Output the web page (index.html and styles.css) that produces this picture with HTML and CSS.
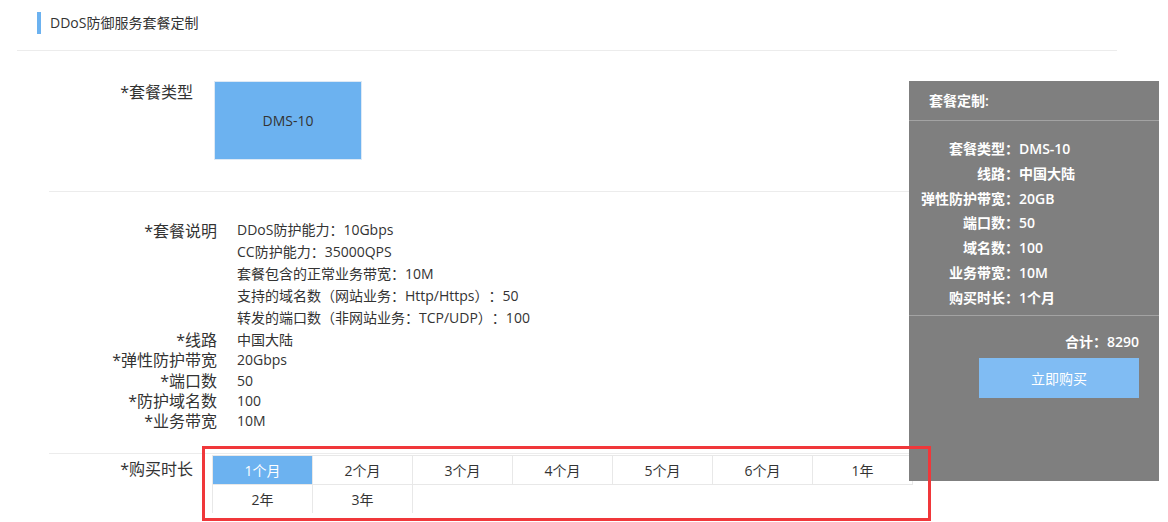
FILE: index.html
```html
<!DOCTYPE html>
<html lang="zh-CN">
<head>
<meta charset="utf-8">
<title>DDoS防御服务套餐定制</title>
<link rel="stylesheet" href="styles.css">
</head>
<body>
<div class="page">
  <div class="header">
    <span class="bar"></span>
    <h1 class="title">DDoS防御服务套餐定制</h1>
  </div>
  <div class="form">
    <div class="row row-type">
      <div class="label label-a">*套餐类型</div>
      <div class="type-box">DMS-10</div>
    </div>
    <div class="row row-desc">
      <div class="pair desc">
        <div class="label label-b">*套餐说明</div>
        <ul class="desc-list">
          <li>DDoS防护能力：10Gbps</li>
          <li>CC防护能力：35000QPS</li>
          <li>套餐包含的正常业务带宽：10M</li>
          <li>支持的域名数（网站业务：Http/Https）：50</li>
          <li>转发的端口数（非网站业务：TCP/UDP）：100</li>
        </ul>
      </div>
      <div class="pair line"><div class="label label-b">*线路</div><div class="val">中国大陆</div></div>
      <div class="pair line"><div class="label label-b">*弹性防护带宽</div><div class="val">20Gbps</div></div>
      <div class="pair line"><div class="label label-b">*端口数</div><div class="val">50</div></div>
      <div class="pair line"><div class="label label-b">*防护域名数</div><div class="val">100</div></div>
      <div class="pair line"><div class="label label-b">*业务带宽</div><div class="val">10M</div></div>
    </div>
    <div class="row row-time">
      <div class="label label-c">*购买时长</div>
      <div class="cells">
        <div class="cell active">1个月</div>
        <div class="cell">2个月</div>
        <div class="cell">3个月</div>
        <div class="cell">4个月</div>
        <div class="cell">5个月</div>
        <div class="cell">6个月</div>
        <div class="cell">1年</div>
        <div class="cell">2年</div>
        <div class="cell">3年</div>
      </div>
    </div>
  </div>
</div>
<aside class="panel">
  <div class="panel-title">套餐定制:</div>
  <div class="panel-list">
    <div class="prow"><span class="pk">套餐类型：</span><span class="pv">DMS-10</span></div>
    <div class="prow"><span class="pk">线路：</span><span class="pv">中国大陆</span></div>
    <div class="prow"><span class="pk">弹性防护带宽：</span><span class="pv">20GB</span></div>
    <div class="prow"><span class="pk">端口数：</span><span class="pv">50</span></div>
    <div class="prow"><span class="pk">域名数：</span><span class="pv">100</span></div>
    <div class="prow"><span class="pk">业务带宽：</span><span class="pv">10M</span></div>
    <div class="prow"><span class="pk">购买时长：</span><span class="pv">1个月</span></div>
  </div>
  <div class="total">合计：8290</div>
  <div class="buy">立即购买</div>
</aside>
<div class="annot"></div>
</body>
</html>
```
FILE: styles.css
```css
html, body {
  margin: 0;
  padding: 0;
  background: #fff;
}
body {
  font-family: "Open Sans", "Noto Sans CJK SC", sans-serif;
  color: #333;
  font-size: 14px;
  text-spacing-trim: space-all;
  font-feature-settings: "chws" 0, "halt" 0;
}
.page {
  margin-left: 17px;
  width: 1100px;
}
.header {
  height: 51px;
  box-sizing: border-box;
  border-bottom: 1px solid #ececec;
  padding: 12px 0 0 20px;
  display: flex;
  align-items: flex-start;
}
.bar {
  width: 4px;
  height: 22px;
  background: #6cb2f0;
}
.title {
  margin: 0 0 0 9px;
  font-size: 14px;
  font-weight: normal;
  line-height: 22px;
  color: #333;
}
.form {
  margin-left: 32px;
}
.row {
  display: flex;
  align-items: flex-start;
}
.label {
  font-size: 16px;
  text-align: right;
  white-space: nowrap;
  flex: none;
  color: #333;
}
.row-type {
  padding: 30px 0 31px;
  border-bottom: 1px solid #ececec;
}
.label-a {
  width: 144px;
  margin-right: 21px;
  line-height: 23px;
}
.type-box {
  width: 148px;
  height: 79px;
  box-sizing: border-box;
  border: 1px solid #dde9f5;
  background: #6cb2f0;
  display: flex;
  align-items: center;
  justify-content: center;
  font-size: 14px;
  color: #333;
}
.row-desc {
  flex-direction: column;
  padding: 27px 0 22px;
  border-bottom: 1px solid #ececec;
}
.pair {
  display: flex;
  align-items: flex-start;
}
.label-b {
  width: 168px;
  margin-right: 20px;
}
.desc .label-b {
  line-height: 24px;
}
.desc-list {
  list-style: none;
  margin: 0 0 1px;
  padding: 0;
  font-size: 14px;
  line-height: 22px;
}
.line .label-b,
.line .val {
  line-height: 20.3px;
}
.val {
  font-size: 14px;
}
.row-time {
  padding-top: 1px;
}
.label-c {
  width: 144px;
  margin-right: 19px;
  line-height: 28px;
}
.cells {
  width: 701px;
  display: flex;
  flex-wrap: wrap;
}
.cell {
  width: 101px;
  height: 30px;
  box-sizing: border-box;
  border: 1px solid #e8e8e8;
  margin: 0 -1px -1px 0;
  display: flex;
  align-items: center;
  justify-content: center;
  font-size: 14px;
  color: #333;
}
.cell.active {
  background: #6cb2f0;
  color: #fff;
}
.panel {
  position: absolute;
  left: 909px;
  top: 81px;
  width: 250px;
  height: 400px;
  background: #7f7f7f;
  color: #fff;
  font-weight: 600;
  font-size: 14px;
}
.panel-title {
  height: 40px;
  box-sizing: border-box;
  border-bottom: 1px solid #a3a3a3;
  padding-left: 20px;
  line-height: 40px;
}
.panel-list {
  padding: 16px 0 5px;
  border-bottom: 1px solid #a3a3a3;
}
.prow {
  display: flex;
  line-height: 24.75px;
}
.pk {
  width: 110px;
  text-align: right;
  white-space: nowrap;
}
.total {
  padding: 16px 20px 0 0;
  text-align: right;
  line-height: 20px;
}
.buy {
  margin: 6px 0 0 70px;
  width: 160px;
  height: 40px;
  background: #80bcf3;
  display: flex;
  align-items: center;
  justify-content: center;
  font-weight: normal;
  font-size: 14px;
  color: #fff;
}
.annot {
  position: absolute;
  left: 202px;
  top: 446px;
  width: 729px;
  height: 75px;
  box-sizing: border-box;
  border: 3px solid #f0373a;
}
```
